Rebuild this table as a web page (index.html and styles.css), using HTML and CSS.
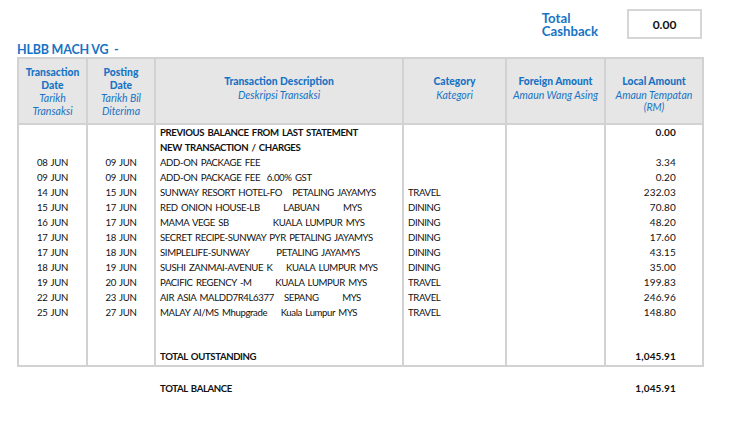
FILE: index.html
```html
<!DOCTYPE html>
<html>
<head>
<meta charset="utf-8">
<link rel="stylesheet" href="styles.css">
</head>
<body>
<div class="page">
  <div class="cashback">
    <div class="cashback-label">Total<br>Cashback</div>
    <div class="cashback-box">0.00</div>
  </div>
  <div class="card-title">HLBB MACH VG&nbsp; -</div>
  <table class="stmt">
    <colgroup>
      <col class="c-date"><col class="c-post"><col class="c-desc"><col class="c-cat"><col class="c-fx"><col class="c-amt">
    </colgroup>
    <thead>
      <tr>
        <th class="th-top"><b>Transaction<br>Date</b><i>Tarikh<br>Transaksi</i></th>
        <th class="th-top"><b>Posting<br>Date</b><i>Tarikh Bil<br>Diterima</i></th>
        <th class="th-mid"><b>Transaction Description</b><i>Deskripsi Transaksi</i></th>
        <th class="th-mid"><b>Category</b><i>Kategori</i></th>
        <th class="th-mid"><b>Foreign Amount</b><i>Amaun Wang Asing</i></th>
        <th class="th-mid"><b>Local Amount</b><i>Amaun Tempatan<br>(RM)</i></th>
      </tr>
    </thead>
    <tbody>
      <tr class="first"><td></td><td></td><td class="desc strong">PREVIOUS BALANCE FROM LAST STATEMENT</td><td></td><td></td><td class="amt strong">0.00</td></tr>
      <tr><td></td><td></td><td class="desc strong">NEW TRANSACTION / CHARGES</td><td></td><td></td><td class="amt"></td></tr>
      <tr><td class="date">08 JUN</td><td class="date">09 JUN</td><td class="desc">ADD-ON PACKAGE FEE</td><td class="cat"></td><td></td><td class="amt">3.34</td></tr>
      <tr><td class="date">09 JUN</td><td class="date">09 JUN</td><td class="desc">ADD-ON PACKAGE FEE  6.00% GST</td><td class="cat"></td><td></td><td class="amt">0.20</td></tr>
      <tr><td class="date">14 JUN</td><td class="date">15 JUN</td><td class="desc">SUNWAY RESORT HOTEL-FO   PETALING JAYAMYS</td><td class="cat">TRAVEL</td><td></td><td class="amt">232.03</td></tr>
      <tr><td class="date">15 JUN</td><td class="date">17 JUN</td><td class="desc">RED ONION HOUSE-LB       LABUAN       MYS</td><td class="cat">DINING</td><td></td><td class="amt">70.80</td></tr>
      <tr><td class="date">16 JUN</td><td class="date">17 JUN</td><td class="desc">MAMA VEGE SB             KUALA LUMPUR MYS</td><td class="cat">DINING</td><td></td><td class="amt">48.20</td></tr>
      <tr><td class="date">17 JUN</td><td class="date">18 JUN</td><td class="desc">SECRET RECIPE-SUNWAY PYR PETALING JAYAMYS</td><td class="cat">DINING</td><td></td><td class="amt">17.60</td></tr>
      <tr><td class="date">17 JUN</td><td class="date">18 JUN</td><td class="desc">SIMPLELIFE-SUNWAY        PETALING JAYAMYS</td><td class="cat">DINING</td><td></td><td class="amt">43.15</td></tr>
      <tr><td class="date">18 JUN</td><td class="date">19 JUN</td><td class="desc">SUSHI ZANMAI-AVENUE K    KUALA LUMPUR MYS</td><td class="cat">DINING</td><td></td><td class="amt">35.00</td></tr>
      <tr><td class="date">19 JUN</td><td class="date">20 JUN</td><td class="desc">PACIFIC REGENCY -M       KUALA LUMPUR MYS</td><td class="cat">TRAVEL</td><td></td><td class="amt">199.83</td></tr>
      <tr><td class="date">22 JUN</td><td class="date">23 JUN</td><td class="desc">AIR ASIA MALDD7R4L6377   SEPANG       MYS</td><td class="cat">TRAVEL</td><td></td><td class="amt">246.96</td></tr>
      <tr><td class="date">25 JUN</td><td class="date">27 JUN</td><td class="desc">MALAY AI/MS Mhupgrade    Kuala Lumpur MYS</td><td class="cat">TRAVEL</td><td></td><td class="amt">148.80</td></tr>
      <tr class="spacer"><td></td><td></td><td></td><td></td><td></td><td></td></tr>
      <tr class="last"><td></td><td></td><td class="desc strong">TOTAL OUTSTANDING</td><td></td><td></td><td class="amt strong">1,045.91</td></tr>
    </tbody>
  </table>
  <div class="balance">
    <span class="balance-label">TOTAL BALANCE</span>
    <span class="balance-amt">1,045.91</span>
  </div>
</div>
</body>
</html>
```

FILE: styles.css
```css
html, body {
  margin: 0;
  padding: 0;
  background: #ffffff;
}
body {
  font-family: "Lato", "Liberation Sans", Arial, sans-serif;
  color: #111111;
  width: 733px;
  height: 440px;
  overflow: hidden;
}
.page {
  padding: 0 0 0 17px;
  width: 685px;
}
.cashback {
  display: flex;
  justify-content: flex-end;
  align-items: center;
  padding-top: 9px;
  height: 30px;
}
.cashback-label {
  color: #1873c4;
  font-weight: bold;
  font-size: 13.2px;
  line-height: 13px;
  margin-right: 29px;
  padding-top: 1px;
}
.cashback-box {
  box-sizing: border-box;
  width: 75px;
  height: 30px;
  border: 2px solid #d6d6d6;
  display: flex;
  align-items: center;
  justify-content: center;
  font-weight: bold;
  font-size: 12px;
  color: #111;
}
.card-title {
  color: #1873c4;
  font-weight: bold;
  font-size: 12.5px;
  letter-spacing: -0.2px;
  line-height: 14px;
  margin-top: 4px;
  height: 14px;
}
.stmt {
  border-collapse: collapse;
  table-layout: fixed;
  width: 685px;
  border: 2px solid #d2d2d2;
}
.c-date { width: 69px; }
.c-post { width: 68px; }
.c-desc { width: 248px; }
.c-cat { width: 103px; }
.c-fx { width: 99px; }
.c-amt { width: 98px; }
.stmt th {
  background: #e6e6e6;
  border: 2px solid #d2d2d2;
  vertical-align: top;
  text-align: center;
  color: #1873c4;
  height: 66px;
  box-sizing: border-box;
  padding: 0 1px;
}
.stmt th b {
  display: block;
  font-size: 10.3px;
  line-height: 12.5px;
}
.stmt th i {
  display: block;
  font-weight: normal;
  font-size: 10.5px;
  line-height: 12.5px;
  margin-top: 1px;
}
.th-top { padding-top: 7px !important; }
.th-mid { padding-top: 16px !important; }
.stmt td {
  border-left: 2px solid #d2d2d2;
  border-right: 2px solid #d2d2d2;
  font-size: 9.6px;
  letter-spacing: -0.38px;
  word-spacing: 1.3px;
  line-height: 15px;
  height: 15px;
  padding: 0;
  white-space: pre;
  overflow: hidden;
}
.stmt td.amt {
  font-size: 10px;
  letter-spacing: 0.15px;
}
.stmt tr.spacer td { height: 29px; }
.stmt tr.last td { padding-bottom: 1px; }
.date { text-align: center; }
.desc { padding-left: 4px !important; }
.cat { padding-left: 4px !important; }
.amt { text-align: right; padding-right: 26px !important; }
.strong { font-weight: bold; }
.balance {
  display: flex;
  height: 15px;
  margin-top: 14px;
  font-size: 9.6px;
  letter-spacing: -0.38px;
  word-spacing: 1.3px;
  line-height: 15px;
  font-weight: bold;
}
.balance-label {
  margin-left: 143px;
}
.balance-amt {
  margin-left: auto;
  margin-right: 26px;
  font-size: 10px;
  letter-spacing: 0.15px;
}
```
